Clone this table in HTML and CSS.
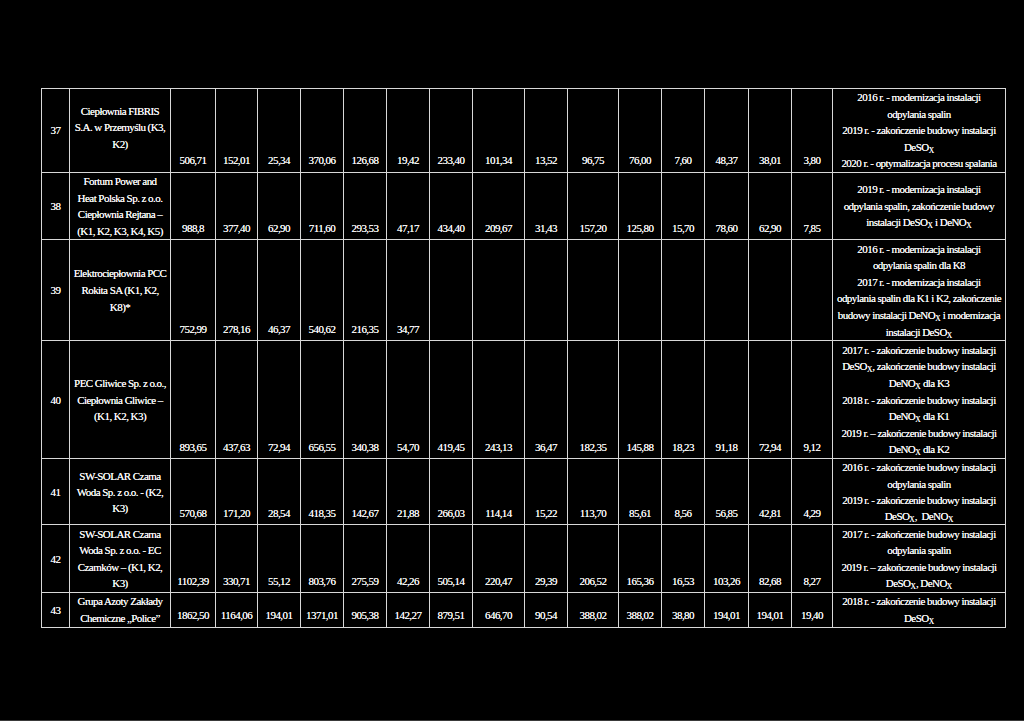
FILE: index.html
```html
<!DOCTYPE html>
<html lang="pl">
<head>
<meta charset="utf-8">
<title>Tabela</title>
<link rel="stylesheet" href="styles.css">
</head>
<body>
<div class="page">
<table class="grid">
<colgroup>
<col class="c-no"><col class="c-name">
<col class="c45"><col class="c42"><col class="c43"><col class="c43"><col class="c43"><col class="c43"><col class="c43"><col class="c52"><col class="c43"><col class="c51"><col class="c43"><col class="c43"><col class="c44"><col class="c43"><col class="c41">
<col class="c-note">
</colgroup>
<tbody>
<tr class="r37">
<td class="no">37</td>
<td class="name">Ciepłownia FIBRIS<br>S.A. w Przemyślu (K3,<br>K2)</td>
<td>506,71</td><td>152,01</td><td>25,34</td><td>370,06</td><td>126,68</td><td>19,42</td><td>233,40</td><td>101,34</td><td>13,52</td><td>96,75</td><td>76,00</td><td>7,60</td><td>48,37</td><td>38,01</td><td>3,80</td>
<td class="note">2016 r. - modernizacja instalacji<br>odpylania spalin<br>2019 r. - zakończenie budowy instalacji<br>DeSO<sub>X</sub><br>2020 r. - optymalizacja procesu spalania</td>
</tr>
<tr class="r38">
<td class="no">38</td>
<td class="name">Fortum Power and<br>Heat Polska Sp. z o.o.<br>Ciepłownia Rejtana –<br>(K1, K2, K3, K4, K5)</td>
<td>988,8</td><td>377,40</td><td>62,90</td><td>711,60</td><td>293,53</td><td>47,17</td><td>434,40</td><td>209,67</td><td>31,43</td><td>157,20</td><td>125,80</td><td>15,70</td><td>78,60</td><td>62,90</td><td>7,85</td>
<td class="note">2019 r. - modernizacja instalacji<br>odpylania spalin, zakończenie budowy<br>instalacji DeSO<sub>X</sub> i DeNO<sub>X</sub></td>
</tr>
<tr class="r39">
<td class="no">39</td>
<td class="name">Elektrociepłownia PCC<br>Rokita SA (K1, K2,<br>K8)*</td>
<td>752,99</td><td>278,16</td><td>46,37</td><td>540,62</td><td>216,35</td><td>34,77</td><td></td><td></td><td></td><td></td><td></td><td></td><td></td><td></td><td></td>
<td class="note">2016 r. - modernizacja instalacji<br>odpylania spalin dla K8<br>2017 r. - modernizacja instalacji<br>odpylania spalin dla K1 i K2, zakończenie<br>budowy instalacji DeNO<sub>X</sub> i modernizacja<br>instalacji DeSO<sub>X</sub></td>
</tr>
<tr class="r40">
<td class="no">40</td>
<td class="name">PEC Gliwice Sp. z o.o.,<br>Ciepłownia Gliwice –<br>(K1, K2, K3)</td>
<td>893,65</td><td>437,63</td><td>72,94</td><td>656,55</td><td>340,38</td><td>54,70</td><td>419,45</td><td>243,13</td><td>36,47</td><td>182,35</td><td>145,88</td><td>18,23</td><td>91,18</td><td>72,94</td><td>9,12</td>
<td class="note">2017 r. - zakończenie budowy instalacji<br>DeSO<sub>X</sub>, zakończenie budowy instalacji<br>DeNO<sub>X</sub> dla K3<br>2018 r. - zakończenie budowy instalacji<br>DeNO<sub>X</sub> dla K1<br>2019 r. – zakończenie budowy instalacji<br>DeNO<sub>X</sub> dla K2</td>
</tr>
<tr class="r41">
<td class="no">41</td>
<td class="name">SW-SOLAR Czarna<br>Woda Sp. z o.o. - (K2,<br>K3)</td>
<td>570,68</td><td>171,20</td><td>28,54</td><td>418,35</td><td>142,67</td><td>21,88</td><td>266,03</td><td>114,14</td><td>15,22</td><td>113,70</td><td>85,61</td><td>8,56</td><td>56,85</td><td>42,81</td><td>4,29</td>
<td class="note">2016 r. - zakończenie budowy instalacji<br>odpylania spalin<br>2019 r. - zakończenie budowy instalacji<br>DeSO<sub>X</sub>,&nbsp; DeNO<sub>X</sub></td>
</tr>
<tr class="r42">
<td class="no">42</td>
<td class="name">SW-SOLAR Czarna<br>Woda Sp. z o.o. - EC<br>Czarnków – (K1, K2,<br>K3)</td>
<td>1102,39</td><td>330,71</td><td>55,12</td><td>803,76</td><td>275,59</td><td>42,26</td><td>505,14</td><td>220,47</td><td>29,39</td><td>206,52</td><td>165,36</td><td>16,53</td><td>103,26</td><td>82,68</td><td>8,27</td>
<td class="note">2017 r. - zakończenie budowy instalacji<br>odpylania spalin<br>2019 r. – zakończenie budowy instalacji<br>DeSO<sub>X</sub>, DeNO<sub>X</sub></td>
</tr>
<tr class="r43">
<td class="no">43</td>
<td class="name">Grupa Azoty Zakłady<br>Chemiczne „Police”</td>
<td>1862,50</td><td>1164,06</td><td>194,01</td><td>1371,01</td><td>905,38</td><td>142,27</td><td>879,51</td><td>646,70</td><td>90,54</td><td>388,02</td><td>388,02</td><td>38,80</td><td>194,01</td><td>194,01</td><td>19,40</td>
<td class="note">2018 r. - zakończenie budowy instalacji<br>DeSO<sub>X</sub></td>
</tr>
</tbody>
</table>
</div>
</body>
</html>
```

FILE: styles.css
```css
html, body {
  margin: 0;
  padding: 0;
  background: #000;
}

.page {
  box-sizing: border-box;
  height: 721px;
  padding: 88px 0 0 41px;
  border-bottom: 1px solid #3a3a3a;
  font-family: "Liberation Serif", "Times New Roman", serif;
  font-size: 11px;
  letter-spacing: -0.55px;
  color: #f4f4f4;
  text-shadow: 0 0 0.5px #ffffff;
}

.grid {
  border-collapse: collapse;
  table-layout: fixed;
  width: 964px;
}

.grid td {
  border: 1px solid #d8d8d8;
  padding: 0 0 3px 0;
  line-height: 16.6px;
  text-align: center;
  vertical-align: bottom;
  white-space: nowrap;
  overflow: hidden;
}

.grid td.no,
.grid td.name,
.grid td.note {
  vertical-align: middle;
  padding: 0;
}

.grid tr.r37 td.name {
  padding-bottom: 6px;
}

.grid tr.r41 td {
  line-height: 16.2px;
}

.grid sub {
  font-size: 7.5px;
  line-height: 0;
  vertical-align: baseline;
  position: relative;
  top: 2px;
  letter-spacing: 0;
}

.c-no { width: 28px; }
.c-name { width: 101px; }
.c45 { width: 45px; }
.c42 { width: 42px; }
.c43 { width: 43px; }
.c44 { width: 44px; }
.c51 { width: 51px; }
.c52 { width: 52px; }
.c41 { width: 41px; }
.c-note { width: 173px; }

.r37 { height: 84px; }
.r38 { height: 67px; }
.r39 { height: 101px; }
.r40 { height: 118px; }
.r41 { height: 66px; }
.r42 { height: 68px; }
.r43 { height: 34px; }
```
